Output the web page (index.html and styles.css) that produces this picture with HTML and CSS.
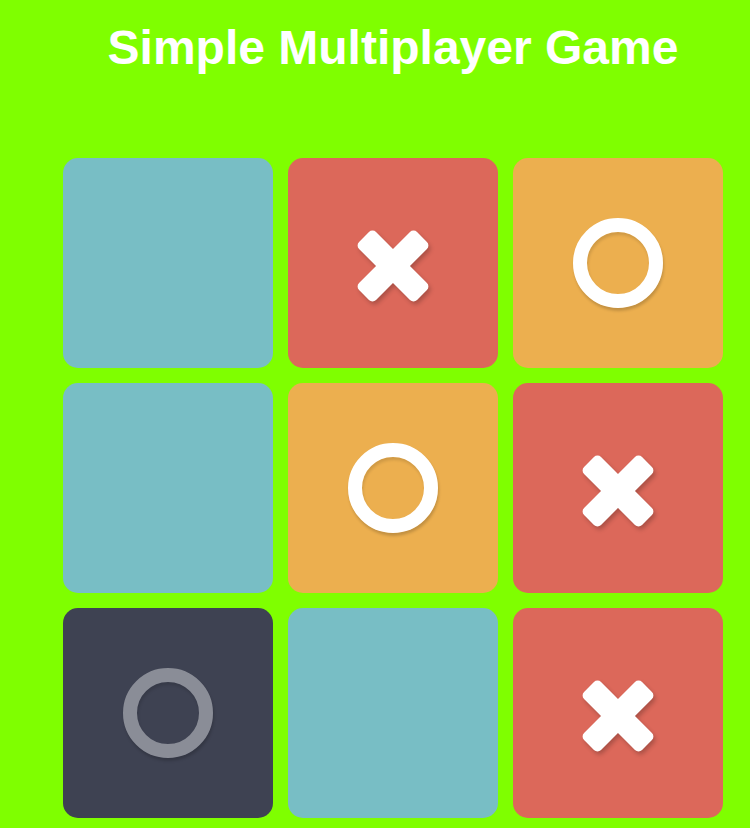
FILE: index.html
```html
<!DOCTYPE html>
<html>
<head>
<meta charset="utf-8">
<link rel="stylesheet" href="styles.css">
</head>
<body>
<div class="game">
  <h1 class="title">Simple Multiplayer Game</h1>
  <div class="board">
    <div class="tile teal"></div>
    <div class="tile red">
      <svg class="mark-x" viewBox="0 0 90 90"><g transform="translate(45 48) rotate(45)"><rect x="-41" y="-12" width="82" height="24" rx="5"/><rect x="-12" y="-41" width="24" height="82" rx="5"/></g></svg>
    </div>
    <div class="tile orange"><span class="mark-o"></span></div>
    <div class="tile teal"></div>
    <div class="tile orange"><span class="mark-o"></span></div>
    <div class="tile red">
      <svg class="mark-x" viewBox="0 0 90 90"><g transform="translate(45 48) rotate(45)"><rect x="-41" y="-12" width="82" height="24" rx="5"/><rect x="-12" y="-41" width="24" height="82" rx="5"/></g></svg>
    </div>
    <div class="tile dark"><span class="mark-o dim"></span></div>
    <div class="tile teal"></div>
    <div class="tile red">
      <svg class="mark-x" viewBox="0 0 90 90"><g transform="translate(45 48) rotate(45)"><rect x="-41" y="-12" width="82" height="24" rx="5"/><rect x="-12" y="-41" width="24" height="82" rx="5"/></g></svg>
    </div>
  </div>
</div>
</body>
</html>
```
FILE: styles.css
```css
html, body {
  margin: 0;
  padding: 0;
  background: #7fff00;
  font-family: "Liberation Sans", Arial, sans-serif;
}
.game {
  width: 660px;
  padding-left: 63px;
}
.title {
  margin: 0;
  padding-top: 21px;
  height: 158px;
  box-sizing: border-box;
  text-align: center;
  color: #fff;
  font-size: 48px;
  font-weight: bold;
  line-height: 54px;
}
.board {
  display: grid;
  grid-template-columns: repeat(3, 210px);
  grid-auto-rows: 210px;
  gap: 15px;
}
.tile {
  border-radius: 15px;
  display: flex;
  align-items: center;
  justify-content: center;
}
.teal { background: #78bec5; }
.red { background: #dc685a; }
.orange { background: #ecaf4f; }
.dark { background: #3e4252; }
.mark-x {
  width: 90px;
  height: 90px;
  fill: #fff;
  filter: drop-shadow(2px 3px 2px rgba(0,0,0,0.22));
}
.mark-o {
  width: 90px;
  height: 90px;
  box-sizing: border-box;
  border: 14px solid #fff;
  border-radius: 50%;
  box-shadow: 1px 3px 3px rgba(0,0,0,0.18), inset 1px 3px 3px rgba(0,0,0,0.12);
}
.mark-o.dim {
  border-color: #8a8d97;
}
```
